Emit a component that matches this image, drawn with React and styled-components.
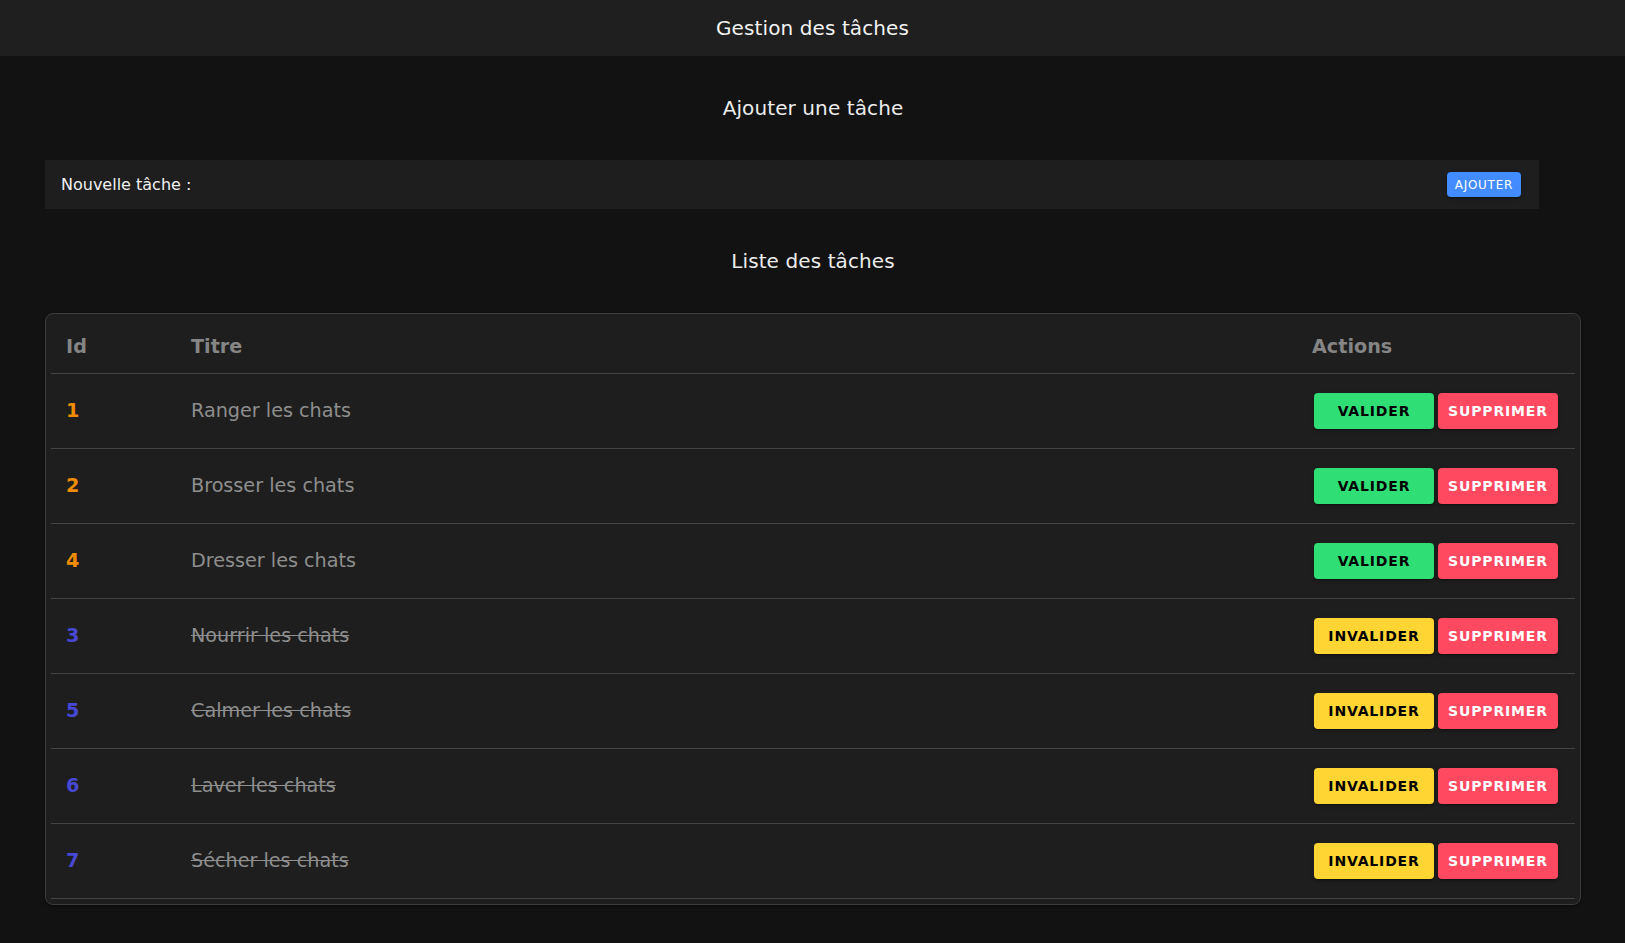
import React from "react";
import styled, { createGlobalStyle } from "styled-components";

const GlobalStyle = createGlobalStyle`
  *, *::before, *::after { box-sizing: border-box; }
  html, body { margin: 0; padding: 0; background: #121212; }
  body {
    font-family: "DejaVu Sans", "Liberation Sans", sans-serif;
    font-size: 16px;
    color: #f0f0f0;
  }
`;

const Page = styled.div`
  min-height: 943px;
  background: #121212;
`;

const Toolbar = styled.header`
  height: 56px;
  background: #1f1f1f;
  display: flex;
  align-items: center;
  justify-content: center;
`;

const ToolbarTitle = styled.h1`
  margin: 0;
  font-size: 20px;
  font-weight: 400;
  line-height: 24px;
  letter-spacing: 0.1px;
  color: #f2f2f2;
`;

const Main = styled.main`
  display: flex;
  flex-direction: column;
  padding: 0 44px 40px 45px;
`;

const SectionTitle = styled.h2`
  margin: 40px 0;
  text-align: center;
  font-size: 20px;
  font-weight: 400;
  line-height: 24px;
  letter-spacing: 0.1px;
  color: #ececec;
`;

const AddForm = styled.form`
  width: calc(100% - 42px);
  height: 49px;
  display: flex;
  align-items: center;
  padding: 0 18px 0 16px;
  background: #1e1e1e;
`;

const Label = styled.label`
  font-size: 16px;
  color: #f0f0f0;
  white-space: nowrap;
`;

const TaskInput = styled.input`
  flex: 1;
  min-width: 0;
  height: 100%;
  border: none;
  outline: none;
  background: transparent;
  color: #f0f0f0;
  font: inherit;
  padding: 0 8px;
`;

const shadow =
  "0 3px 1px -2px rgba(0,0,0,.2), 0 2px 2px 0 rgba(0,0,0,.14), 0 1px 5px 0 rgba(0,0,0,.12)";

const SmallButton = styled.button`
  height: 25px;
  margin: 4px 0 4px 2px;
  padding: 0 8px;
  border: none;
  border-radius: 4px;
  background: #428cff;
  color: #ffffff;
  font-family: "DejaVu Sans", sans-serif;
  font-size: 12px;
  font-weight: 400;
  letter-spacing: 0.72px;
  text-transform: uppercase;
  box-shadow: ${shadow};
  cursor: pointer;
`;

const TableCard = styled.div`
  border: 1px solid #3c3c3c;
  border-radius: 8px;
  padding: 5px;
  background: #1e1e1e;
  box-shadow: 0 1px 3px rgba(0, 0, 0, 0.5);
`;

const Table = styled.table`
  width: 100%;
  border-collapse: collapse;
`;

const HeadCell = styled.th`
  text-align: left;
  padding: 17px 15px 15px 15px;
  font-size: 19.2px;
  line-height: 22px;
  font-weight: 700;
  color: #858585;
  border-bottom: 1px solid #444444;
  width: ${(p) => p.$width || "auto"};
  white-space: nowrap;
`;

const Row = styled.tr`
  border-bottom: 1px solid #444444;
`;

const Cell = styled.td`
  padding: 15px 15px 15px 15px;
  font-size: 19.2px;
  line-height: 22px;
  vertical-align: middle;
  color: #8e8e8e;
  width: ${(p) => p.$width || "auto"};
  white-space: nowrap;
`;

const IdCell = styled(Cell)`
  font-weight: 700;
  color: ${(p) => (p.$done ? "#4848d4" : "#f08c00")};
`;

const TitleCell = styled(Cell)`
  text-decoration: ${(p) => (p.$done ? "line-through" : "none")};
`;

const Actions = styled.div`
  display: flex;
`;

const variants = {
  success: { bg: "#2fdf75", fg: "#000000" },
  warning: { bg: "#ffd534", fg: "#000000" },
  danger: { bg: "#ff4961", fg: "#ffffff" },
};

const ActionButton = styled.button`
  width: 120px;
  height: 36px;
  margin: 4px 2px;
  padding: 0;
  border: none;
  border-radius: 4px;
  background: ${(p) => variants[p.$variant].bg};
  color: ${(p) => variants[p.$variant].fg};
  font-family: "DejaVu Sans", sans-serif;
  font-size: 14px;
  font-weight: 700;
  letter-spacing: 0.84px;
  text-transform: uppercase;
  box-shadow: ${shadow};
  cursor: pointer;
`;

const tasks = [
  { id: 1, title: "Ranger les chats", done: false },
  { id: 2, title: "Brosser les chats", done: false },
  { id: 4, title: "Dresser les chats", done: false },
  { id: 3, title: "Nourrir les chats", done: true },
  { id: 5, title: "Calmer les chats", done: true },
  { id: 6, title: "Laver les chats", done: true },
  { id: 7, title: "Sécher les chats", done: true },
];

export default function App() {
  return (
    <Page>
      <GlobalStyle />
      <Toolbar>
        <ToolbarTitle>Gestion des tâches</ToolbarTitle>
      </Toolbar>
      <Main>
        <SectionTitle>Ajouter une tâche</SectionTitle>
        <AddForm onSubmit={(e) => e.preventDefault()}>
          <Label htmlFor="new-task">Nouvelle tâche :</Label>
          <TaskInput id="new-task" type="text" />
          <SmallButton type="submit">Ajouter</SmallButton>
        </AddForm>
        <SectionTitle>Liste des tâches</SectionTitle>
        <TableCard>
          <Table>
            <thead>
              <tr>
                <HeadCell $width="125px">Id</HeadCell>
                <HeadCell>Titre</HeadCell>
                <HeadCell $width="1px">Actions</HeadCell>
              </tr>
            </thead>
            <tbody>
              {tasks.map((t) => (
                <Row key={t.id}>
                  <IdCell $done={t.done} $width="125px">
                    {t.id}
                  </IdCell>
                  <TitleCell $done={t.done}>{t.title}</TitleCell>
                  <Cell $width="1px">
                    <Actions>
                      <ActionButton $variant={t.done ? "warning" : "success"}>
                        {t.done ? "Invalider" : "Valider"}
                      </ActionButton>
                      <ActionButton $variant="danger">Supprimer</ActionButton>
                    </Actions>
                  </Cell>
                </Row>
              ))}
            </tbody>
          </Table>
        </TableCard>
      </Main>
    </Page>
  );
}
